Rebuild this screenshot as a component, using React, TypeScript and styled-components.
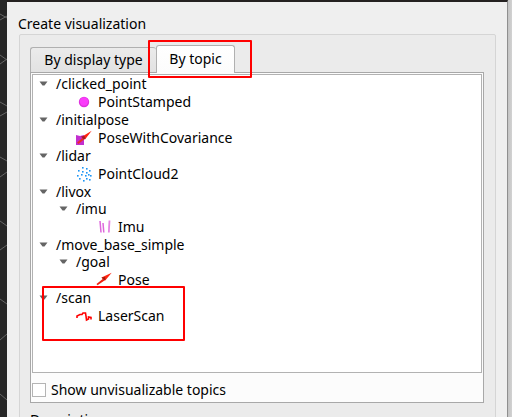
import React, { useState } from "react";
import styled, { createGlobalStyle } from "styled-components";

const GlobalStyle = createGlobalStyle`
  * { box-sizing: border-box; }
  body {
    margin: 0;
    overflow: hidden;
    background: #262626;
    color: #000;
    font: 14px/18px "Noto Sans", "Open Sans", sans-serif;
  }
`;

const Desktop = styled.div`
  display: flex;
  height: 100vh;
  overflow: hidden;
`;

const Viewport = styled.svg`
  flex: none;
  width: 7px;
  height: 500px;
`;

const Dialog = styled.main`
  flex: 1;
  min-width: 0;
  padding: 12px 11px 0 12px;
  background: #efefef;
  border-top: 2px solid #242120;
  border-right: 1px solid #8f8f8f;
`;

const SidePanel = styled.div`
  flex: none;
  width: 4px;
  background: linear-gradient(90deg, #c4c4c4, #d2d2d2);
`;

const GroupTitle = styled.h1`
  margin: 0 0 0 -1px;
  font-size: 14px;
  line-height: 20px;
  font-weight: 400;
`;

const GroupBox = styled.section`
  min-height: 100vh;
  padding: 10px 11px 0 10px;
  background: #ebebeb;
  border: 1px solid #d5d5d5;
  border-radius: 2px;
`;

const TabBar = styled.div`
  display: flex;
  align-items: flex-end;
  height: 27px;
`;

const Tab = styled.button<{ $active: boolean }>`
  position: relative;
  z-index: ${(p) => (p.$active ? 1 : 0)};
  height: ${(p) => (p.$active ? 28 : 25)}px;
  width: ${(p) => (p.$active ? 79 : 126)}px;
  margin-bottom: ${(p) => (p.$active ? -1 : 0)}px;
  padding: 0 0 ${(p) => (p.$active ? 1 : 0)}px;
  border: 1px solid #b0b0b0;
  border-bottom: 0;
  border-right-width: ${(p) => (p.$active ? 1 : 0)}px;
  border-radius: 3px 3px 0 0;
  background: ${(p) => (p.$active ? "linear-gradient(#fff, #fcfcfc)" : "linear-gradient(#ebebeb, #e2e2e2)")};
  color: inherit;
  font: inherit;
  white-space: nowrap;
`;

const Highlight = styled.span<{ $kind: "tab" | "topic" }>`
  position: absolute;
  z-index: 2;
  pointer-events: none;
  border: 2px solid #f00;
  border-radius: 1px;
  ${(p) =>
    p.$kind === "tab"
      ? "inset: -6px -18px -5px -9px;"
      : "left: 9px; top: -3px; width: 143px; height: 55px;"}
`;

const TabPane = styled.div`
  padding: 1px;
  background: #fcfcfc;
  border: 1px solid #a8a8a8;
`;

const TopicTree = styled.div`
  height: 299px;
  background: #fff;
  border: 1px solid #b2b2b2;
`;

const Branch = styled.ul<{ $nested?: boolean }>`
  margin: 0;
  padding: 0 0 0 ${(p) => (p.$nested ? 20 : 0)}px;
  list-style: none;
`;

const Node = styled.li`
  position: relative;
`;

const Row = styled.div<{ $leaf?: boolean }>`
  display: flex;
  align-items: center;
  height: ${(p) => (p.$leaf ? 19 : 17)}px;
  padding-left: ${(p) => (p.$leaf ? 23 : 3)}px;
  gap: ${(p) => (p.$leaf ? 6 : 5)}px;
  line-height: 17px;
`;

const Expander = styled.button`
  display: flex;
  width: 15px;
  height: 16px;
  padding: 5px 3px;
  border: 0;
  background: none;
`;

const Icon = styled.svg`
  flex: none;
  width: 16px;
  height: 16px;
`;

const Option = styled.label`
  display: flex;
  align-items: center;
  gap: 5px;
  height: 28px;
  padding-top: 6px;
`;

const CheckBox = styled.input`
  appearance: none;
  width: 14px;
  height: 14px;
  margin: 0;
  border: 1px solid #b4b4b4;
  background: #fff;
  &:checked { background: #555; box-shadow: inset 0 0 0 3px #fff; }
`;

const Description = styled.h2`
  margin: 8px 0 0;
  font-size: 14px;
  line-height: 18px;
  font-weight: 400;
`;

type Kind = "point" | "covariance" | "cloud" | "imu" | "pose" | "laser";
interface Topic {
  name: string;
  icon?: Kind;
  children?: Topic[];
  marked?: boolean;
}

const topics: Topic[] = [
  { name: "/clicked_point", children: [{ name: "PointStamped", icon: "point" }] },
  { name: "/initialpose", children: [{ name: "PoseWithCovariance", icon: "covariance" }] },
  { name: "/lidar", children: [{ name: "PointCloud2", icon: "cloud" }] },
  { name: "/livox", children: [{ name: "/imu", children: [{ name: "Imu", icon: "imu" }] }] },
  { name: "/move_base_simple", children: [{ name: "/goal", children: [{ name: "Pose", icon: "pose" }] }] },
  { name: "/scan", marked: true, children: [{ name: "LaserScan", icon: "laser" }] },
];

const cloudDots = [
  [6, 1], [10, 2], [2, 4], [6, 5], [13, 4], [10, 6], [1, 9], [5, 8],
  [9, 9], [14, 9], [12, 8], [3, 12], [10, 12], [7, 14], [13, 13],
];

const drawings: Record<Kind, React.ReactNode> = {
  point: (
    <>
      <circle cx="8" cy="8" r="5.2" fill="#dc30dc" />
      <circle cx="8" cy="7.5" r="4.2" fill="#fa3cfa" />
    </>
  ),
  covariance: (
    <>
      <path d="M0 5L4 6L8 5V15H0Z" fill="#c22fcf" />
      <path d="M1 12.5L7 7.5L8.5 9L2.5 14Z" fill="#ed2b2b" />
      <path d="M5.5 7L15.7 0.8L9 9.5L8 8.5Z" fill="#ff2410" />
      <path d="M5 6.5L8.5 6L9.5 8.5L8 9.5Z" fill="#a3182c" />
    </>
  ),
  cloud: cloudDots.map(([x, y]) => (
    <rect key={`${x}-${y}`} x={x} y={y} width="1.6" height="1.6" fill="#1c96f5" />
  )),
  imu: (
    <g fill="none" stroke="#de67dc">
      <path d="M4 2L5 13.5M7 4L7.8 13.5" strokeWidth="1.5" />
      <path d="M13.5 1.5L12.8 13.5" strokeWidth="1.8" stroke="#e584e4" />
    </g>
  ),
  pose: (
    <>
      <path d="M0.5 12L7 6.8L8.5 8.5L1.5 13.3Z" fill="#f02010" />
      <path d="M5.5 5.5L15.7 0.8L9 8.8L8 7.5Z" fill="#ff2410" />
      <path d="M5.5 5.5L9 5L9.5 7.5L8.2 8.5Z" fill="#a51a0c" />
    </>
  ),
  laser: (
    <path
      d="M1 10V8L4 6.5H6L7 5H9.5L10 8L10.5 12L12.5 11V9L15 9.5V11.5"
      fill="none"
      stroke="#f00"
      strokeWidth="1.6"
    />
  ),
};

function TopicNode({ topic }: { topic: Topic }) {
  const [open, setOpen] = useState(true);
  return (
    <Node>
      {topic.marked && <Highlight $kind="topic" />}
      <Row $leaf={!topic.children}>
        {topic.children ? (
          <Expander aria-label={`Toggle ${topic.name}`} aria-expanded={open} onClick={() => setOpen(!open)}>
            <svg width="9" height="6" viewBox="0 0 9 6">
              <path d="M0.5 0.5H8.5L5.5 4.5H3.5Z" fill="#656565" />
            </svg>
          </Expander>
        ) : (
          <Icon viewBox="0 0 16 16" aria-hidden="true">{topic.icon && drawings[topic.icon]}</Icon>
        )}
        <span>{topic.name}</span>
      </Row>
      {topic.children && open && (
        <Branch $nested>
          {topic.children.map((child) => <TopicNode key={child.name} topic={child} />)}
        </Branch>
      )}
    </Node>
  );
}

export default function App() {
  return (
    <>
      <GlobalStyle />
      <Desktop>
        <Viewport viewBox="0 0 7 500" aria-hidden="true">
          <rect width="7" height="500" fill="#262626" />
          <path
            d="M0 14L7 18M0 20L7 16M0 55L7 60M0 64L7 59M0 102L7 106M0 116L7 112M0 157L7 161M0 177L7 172M0 221L7 226M0 250L7 245M0 299L7 304M0 340L7 334M0 394L7 400"
            stroke="#666"
            fill="none"
          />
        </Viewport>
        <Dialog>
          <GroupTitle>Create visualization</GroupTitle>
          <GroupBox>
            <TabBar role="tablist">
              <Tab role="tab" $active={false} aria-selected={false}>By display type</Tab>
              <Tab role="tab" $active aria-selected>
                By topic
                <Highlight $kind="tab" />
              </Tab>
            </TabBar>
            <TabPane>
              <TopicTree>
                <Branch>
                  {topics.map((topic) => <TopicNode key={topic.name} topic={topic} />)}
                </Branch>
              </TopicTree>
              <Option>
                <CheckBox type="checkbox" />
                Show unvisualizable topics
              </Option>
            </TabPane>
            <Description>Description:</Description>
          </GroupBox>
        </Dialog>
        <SidePanel />
      </Desktop>
    </>
  );
}
